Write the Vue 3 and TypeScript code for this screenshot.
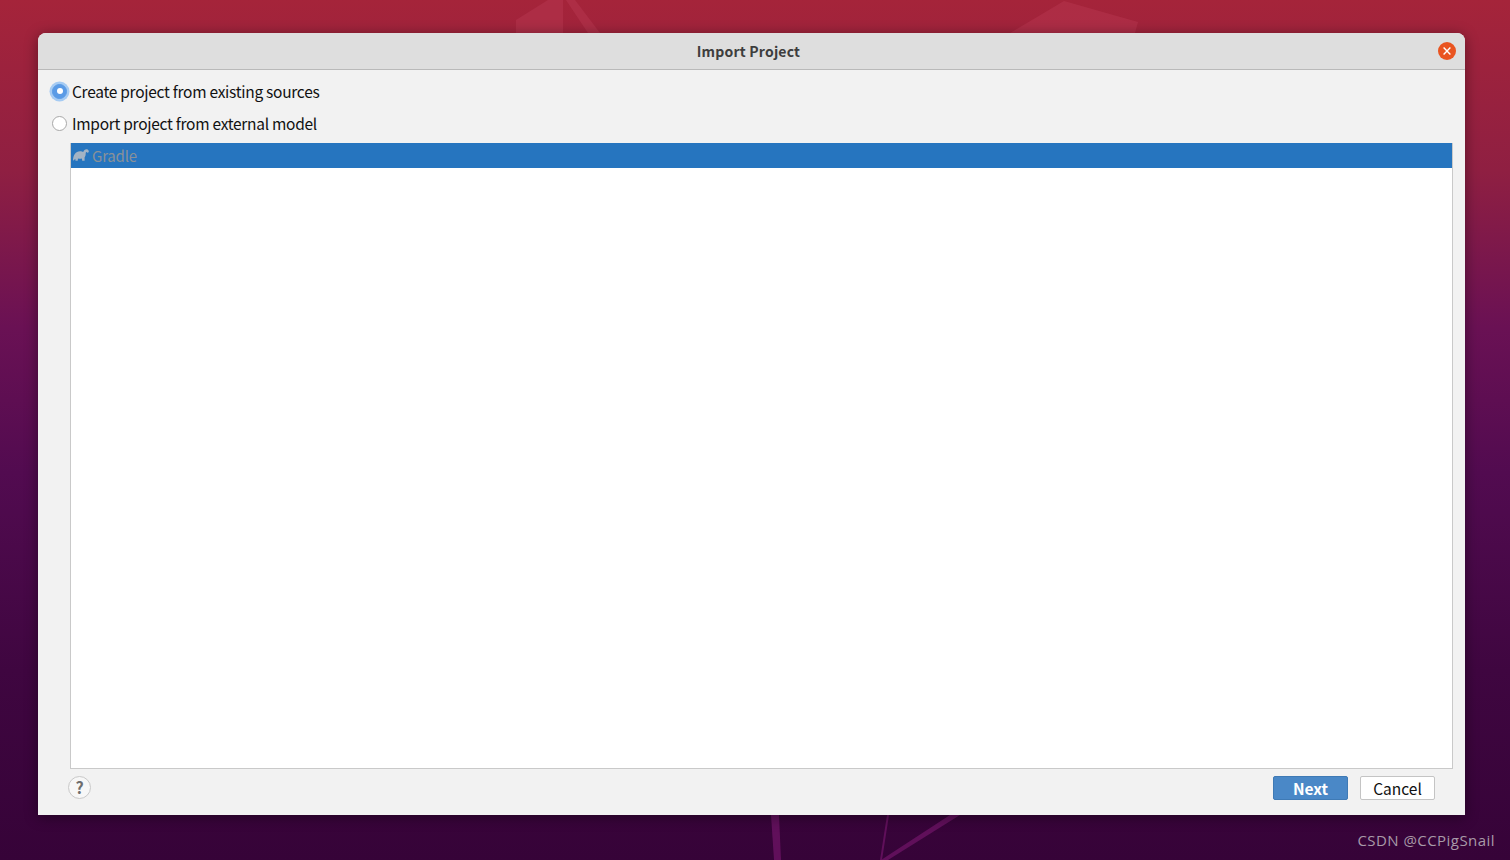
<script setup lang="ts">
const title: string = 'Import Project'
</script>

<template>
  <div class="desktop">
    <svg class="wall" width="1510" height="860" viewBox="0 0 1510 860">
      <g fill="#c0405a" opacity="0.35">
        <path d="M516 20 L548 0 L563 0 L563 33 L516 33 Z" />
        <path d="M566 0 L575 0 L600 33 L588 33 Z" />
        <path d="M1010 33 L1064 1 L1138 22 L1135 33 Z" />
      </g>
      <g fill="#6e1466" opacity="0.75">
        <path d="M771 815 L779 815 L781 860 L774 860 Z" />
        <path d="M887 815 L889 815 L882 860 L880 860 Z" />
        <path d="M950 815 L960 815 L888 860 L881 860 Z" />
      </g>
    </svg>
    <section class="dialog">
      <header class="titlebar">
        <span class="title">{{ title }}</span>
        <span class="close">
          <svg width="18" height="18" viewBox="0 0 18 18">
            <circle cx="9" cy="9" r="9" fill="#e95420" />
            <path d="M5.6 5.6 L12.4 12.4 M12.4 5.6 L5.6 12.4" stroke="#fff" stroke-width="1.4" />
          </svg>
        </span>
      </header>
      <div class="body">
        <label class="option first">
          <span class="radio on"><span class="dot"></span></span>
          <span>Create project from existing sources</span>
        </label>
        <label class="option second">
          <span class="radio"></span>
          <span>Import project from external model</span>
        </label>
        <div class="list">
          <div class="row">
            <svg class="gradle" width="16" height="12" viewBox="0 0 16 12">
              <path
                fill="#a3b3c4"
                d="M0 11.8 C0 6 2.6 2.2 7 2.2 C8.4 2.2 9.5 2.6 10.2 3.1 C10.8 1.2 12.2 0 13.8 0.2 C15.2 0.4 16 1.5 15.8 2.7 C15.5 4 14 4.1 13.5 3.1 C13 3 12.7 3.6 12.7 4.6 C12.7 6.4 12.3 7.6 11.6 8.4 L11.6 11.8 L9.2 11.8 L8.9 9.4 C7.6 9.8 6.2 9.8 5 9.4 L4.7 11.8 L2.5 11.8 L2.3 9.8 C1.7 10.4 1 11.2 0 11.8 Z"
              />
            </svg>
            <span class="row-text">Gradle</span>
          </div>
        </div>
        <footer class="footer">
          <span class="help">?</span>
          <div class="buttons">
            <button class="btn primary" type="button">Next</button>
            <button class="btn" type="button">Cancel</button>
          </div>
        </footer>
      </div>
    </section>
    <span class="mark">CSDN @CCPigSnail</span>
  </div>
</template>

<style>
html,
body {
  margin: 0;
  overflow: hidden;
}
</style>

<style scoped>
.desktop {
  position: relative;
  width: 1510px;
  height: 860px;
  overflow: hidden;
  padding: 33px 45px 45px 38px;
  box-sizing: border-box;
  background: linear-gradient(180deg, #a5243a 0%, #8f1f42 20%, #6a1154 38%, #520b50 55%, #3f0640 78%, #360338 100%);
  font-family: "Noto Sans CJK SC", "Noto Sans", sans-serif;
}
.wall {
  position: absolute;
  inset: 0;
}
.dialog {
  position: relative;
  width: 1427px;
  height: 782px;
  display: flex;
  flex-direction: column;
  background: #f2f2f2;
  border-radius: 8px 8px 0 0;
  box-shadow: 0 2px 14px rgba(0, 0, 0, 0.4);
}
.titlebar {
  position: relative;
  flex: none;
  height: 36px;
  background: #dedede;
  border-bottom: 1px solid #b9b9b9;
  border-radius: 8px 8px 0 0;
  display: flex;
  align-items: center;
  justify-content: center;
}
.title {
  font-size: 14px;
  font-weight: 700;
  color: #3d3d3d;
  letter-spacing: 0.2px;
  margin-right: 6px;
}
.close {
  position: absolute;
  right: 9px;
  top: 9px;
  width: 18px;
  height: 18px;
}
.close svg {
  display: block;
}
.body {
  flex: 1;
  min-height: 0;
  display: flex;
  flex-direction: column;
  padding: 0 12px 0 13px;
}
.option {
  display: flex;
  align-items: center;
  height: 24px;
  font-size: 15.5px;
  color: #111;
  letter-spacing: -0.28px;
}
.first {
  margin-top: 9px;
}
.second {
  margin-top: 8px;
}
.radio {
  flex: none;
  box-sizing: border-box;
  width: 15px;
  height: 15px;
  margin: 0 5px 0 1px;
  border: 1px solid #a8a8a8;
  border-radius: 50%;
  background: #fff;
  display: flex;
  align-items: center;
  justify-content: center;
}
.radio.on {
  background: #5a9be6;
  border-color: #5a9be6;
  box-shadow: 0 0 0 2.5px #a5cbf3;
}
.dot {
  width: 6px;
  height: 6px;
  border-radius: 50%;
  background: #fff;
}
.list {
  flex: 1;
  min-height: 0;
  margin: 8px 0 0 19px;
  background: #fff;
  border: 1px solid #c9c9c9;
  border-top: 0;
}
.row {
  height: 25px;
  background: #2675bf;
  display: flex;
  align-items: center;
  padding-left: 2px;
  font-size: 15px;
  color: #8a9198;
}
.gradle {
  flex: none;
  margin: -2px 3px 0 0;
}
.row-text {
  letter-spacing: -0.2px;
}
.footer {
  flex: none;
  height: 46px;
  display: flex;
  align-items: flex-start;
  justify-content: space-between;
  padding-left: 17px;
}
.help {
  box-sizing: border-box;
  width: 23px;
  height: 23px;
  margin-top: 7px;
  padding-bottom: 2px;
  border: 1px solid #c9c9c9;
  border-radius: 50%;
  background: #f7f7f7;
  display: flex;
  align-items: center;
  justify-content: center;
  font-size: 16px;
  font-weight: 700;
  color: #6e6e6e;
  line-height: 1;
}
.buttons {
  display: flex;
  gap: 12px;
  margin-top: 7px;
  padding-right: 18px;
}
.btn {
  box-sizing: border-box;
  width: 75px;
  height: 24px;
  padding: 2px 0 0;
  border: 1px solid #c4c4c4;
  border-radius: 2px;
  background: #fff;
  color: #111;
  font-family: inherit;
  font-size: 15.5px;
  line-height: 1;
}
.btn.primary {
  background: #4a88c7;
  border-color: #3f7ab5;
  color: #fff;
  font-weight: 700;
}
.mark {
  position: absolute;
  right: 15px;
  bottom: 10px;
  font-family: "Open Sans", "Noto Sans", sans-serif;
  font-size: 15px;
  letter-spacing: 0.45px;
  color: #a89aa8;
}
</style>
